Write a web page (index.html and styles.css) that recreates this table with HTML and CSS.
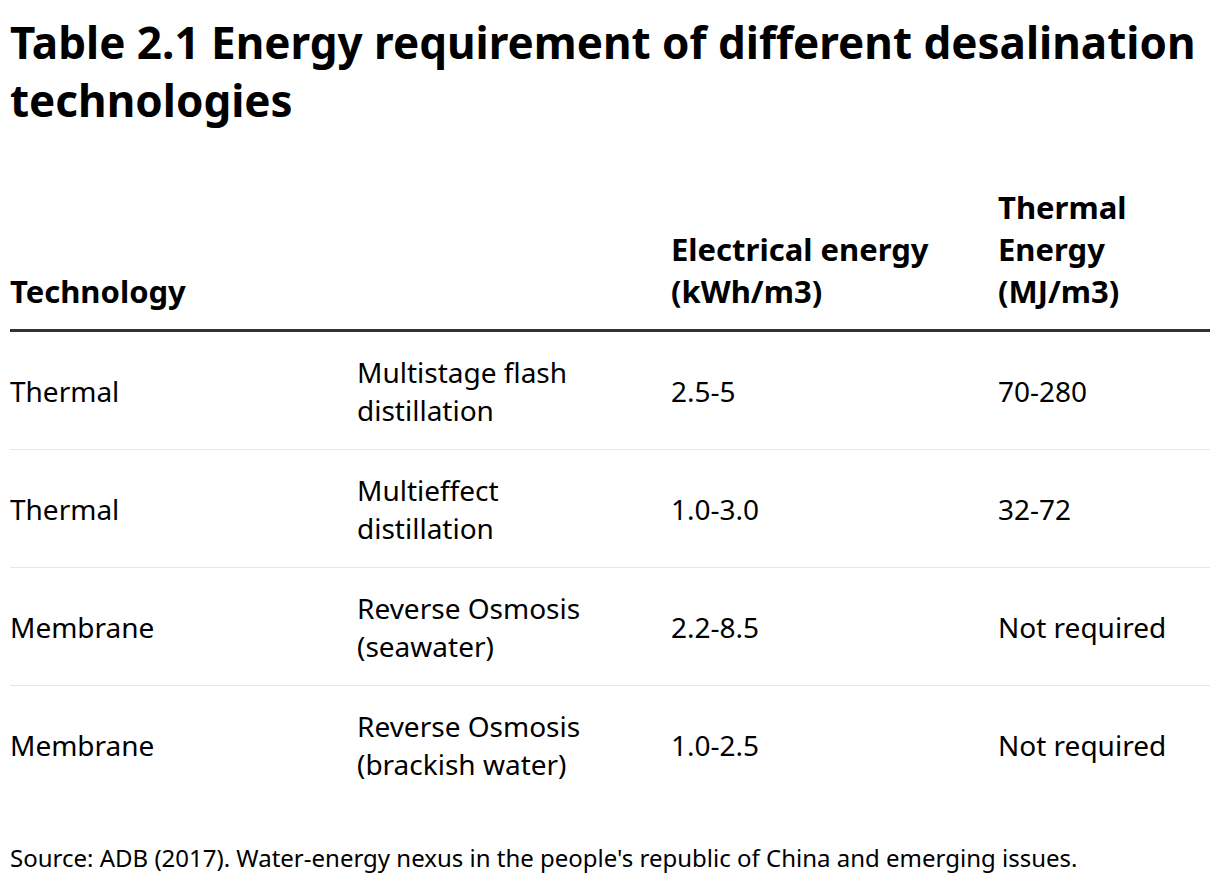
FILE: index.html
```html
<!DOCTYPE html>
<html>
<head>
<meta charset="utf-8">
<link rel="stylesheet" href="styles.css">
</head>
<body>
<div class="page">
  <h1 class="title">Table 2.1 Energy requirement of different desalination technologies</h1>
  <table class="data">
    <thead>
      <tr>
        <th class="c1">Technology</th>
        <th class="c2"></th>
        <th class="c3">Electrical energy (kWh/m3)</th>
        <th class="c4">Thermal Energy (MJ/m3)</th>
      </tr>
    </thead>
    <tbody>
      <tr><td>Thermal</td><td>Multistage flash distillation</td><td>2.5-5</td><td>70-280</td></tr>
      <tr><td>Thermal</td><td>Multieffect distillation</td><td>1.0-3.0</td><td>32-72</td></tr>
      <tr><td>Membrane</td><td>Reverse Osmosis (seawater)</td><td>2.2-8.5</td><td>Not required</td></tr>
      <tr><td>Membrane</td><td>Reverse Osmosis (brackish water)</td><td>1.0-2.5</td><td>Not required</td></tr>
    </tbody>
  </table>
  <p class="source">Source: ADB (2017). Water-energy nexus in the people's republic of China and emerging issues.</p>
</div>
</body>
</html>
```

FILE: styles.css
```css
html, body {
  margin: 0;
  padding: 0;
  background: #fff;
}
body {
  font-family: "Noto Sans", "Open Sans", sans-serif;
  color: #000;
}
.page {
  padding: 13px 10px 0 10px;
}
.title {
  margin: 0;
  font-size: 44px;
  line-height: 58px;
  font-weight: 700;
}
.data {
  width: 1200px;
  border-collapse: collapse;
  margin-top: 57px;
  table-layout: fixed;
}
.data th {
  font-size: 31px;
  line-height: 42px;
  font-weight: 700;
  text-align: left;
  vertical-align: bottom;
  padding: 0 40px 17px 0;
  border-bottom: 3px solid #333;
}
.c1 { width: 307px; }
.c2 { width: 274px; }
.c3 { width: 287px; }
.c4 { width: 172px; }
.data td {
  font-size: 28px;
  line-height: 38px;
  vertical-align: middle;
  padding: 21px 40px 20px 0;
  height: 76px;
  border-bottom: 1px solid #e6e6e6;
}
.data tbody tr:last-child td {
  border-bottom: none;
}
.source {
  margin: 39px 0 0 0;
  font-size: 24px;
  line-height: 32px;
}
```
